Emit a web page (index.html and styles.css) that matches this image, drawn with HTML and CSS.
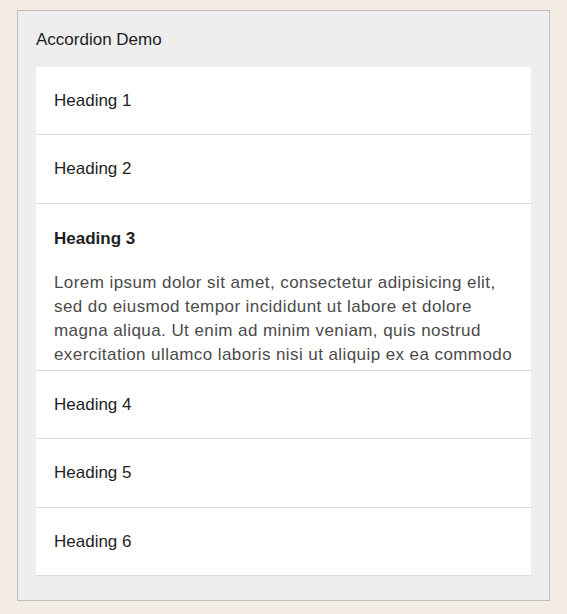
FILE: index.html
```html
<!DOCTYPE html>
<html lang="en">
<head>
<meta charset="utf-8">
<title>Accordion Demo</title>
<link rel="stylesheet" href="styles.css">
</head>
<body>
<div class="panel">
  <div class="title">Accordion Demo</div>
  <div class="accordion">
    <div class="item"><div class="heading">Heading 1</div></div>
    <div class="item"><div class="heading">Heading 2</div></div>
    <div class="item open">
      <div class="heading">Heading 3</div>
      <p class="content">Lorem ipsum dolor sit amet, consectetur adipisicing elit, sed do eiusmod tempor incididunt ut labore et dolore magna aliqua. Ut enim ad minim veniam, quis nostrud exercitation ullamco laboris nisi ut aliquip ex ea commodo consequat. Duis aute irure dolor in reprehenderit in voluptate velit esse cillum dolore eu fugiat nulla pariatur.</p>
    </div>
    <div class="item"><div class="heading">Heading 4</div></div>
    <div class="item"><div class="heading">Heading 5</div></div>
    <div class="item"><div class="heading">Heading 6</div></div>
  </div>
</div>
</body>
</html>
```
FILE: styles.css
```css
html, body {
  margin: 0;
  background: #f3ece3;
}
body {
  padding: 10px 17px;
  font-family: "Liberation Sans", Arial, sans-serif;
  font-size: 17px;
  line-height: 24px;
  color: #1e1e1e;
}
.panel {
  box-sizing: border-box;
  width: 533px;
  height: 591px;
  background: #eeeeee;
  border: 1px solid #bdbdbd;
  padding: 17px 18px 24px 18px;
}
.title {
  margin-bottom: 15px;
}
.accordion {
  background: #ffffff;
}
.item {
  border-bottom: 1px solid #dcdcdc;
}
.heading {
  padding: 22px 18px 21.4px 18px;
}
.open {
  height: 166px;
  overflow: hidden;
}
.open .heading {
  font-weight: bold;
  padding-top: 23px;
  padding-bottom: 20px;
}
.content {
  margin: 0;
  padding: 0 18px;
  color: #4a4a4a;
  letter-spacing: 0.42px;
}
```
